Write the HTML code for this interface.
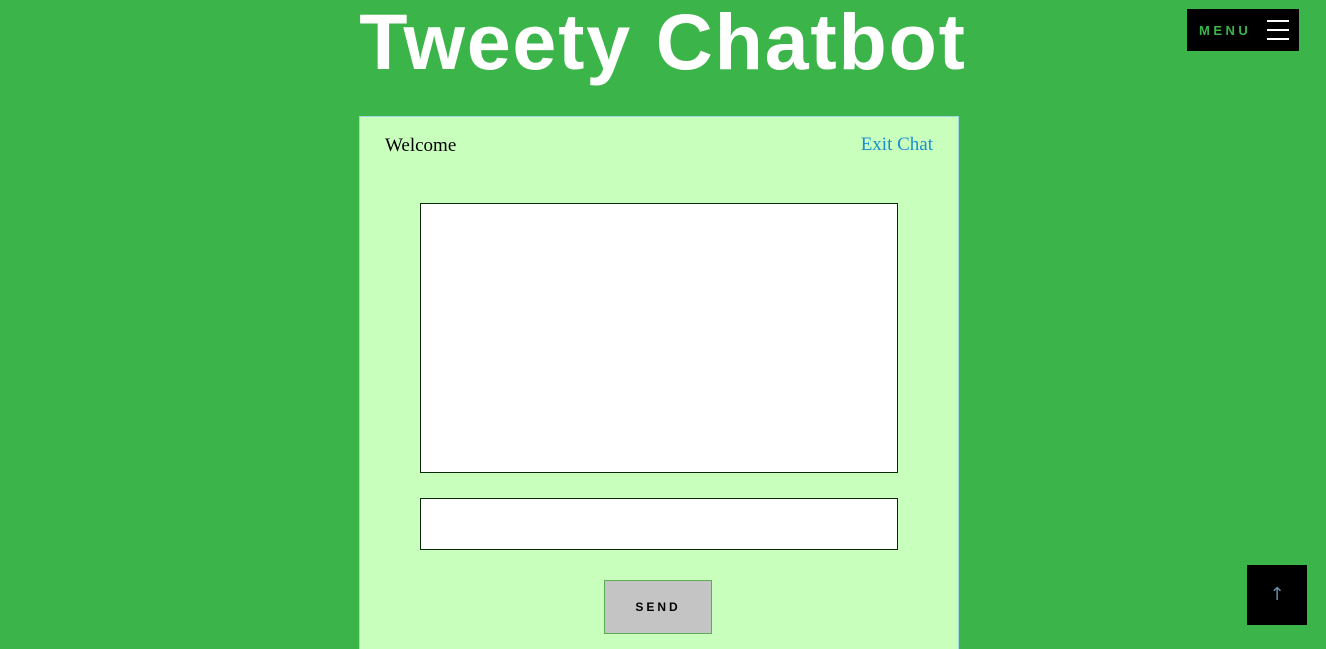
<!DOCTYPE html>
<html><head><style>
html,body{margin:0;width:1326px;height:649px;overflow:hidden}
body{background:#3bb54a;position:relative;font-family:"Liberation Serif",serif}
h1{position:absolute;left:0;right:0;top:-4px;margin:0;text-align:center;color:#fff;font:bold 79px/92px "Liberation Sans",sans-serif;letter-spacing:1.8px}
.menu{position:absolute;left:1187px;top:9px;width:112px;height:42px;background:#000}
.menu span{position:absolute;left:12px;top:14px;color:#3bb54a;font:bold 13px "Liberation Sans",sans-serif;letter-spacing:3.5px}
.menu i{position:absolute;left:80px;width:22px;height:2px;background:#fff}
.panel{position:absolute;left:359px;top:116px;width:598px;height:540px;background:#c9ffbd;border:1px solid #9dd8e0;border-bottom:0}
.w{position:absolute;left:25px;top:18px;font-size:19px;color:#000}
.e{position:absolute;right:25px;top:17px;font-size:19px;color:#1a8fd0}
.ta{position:absolute;left:60px;top:86px;width:476px;height:268px;background:#fff;border:1px solid #0a2a0a}
.in{position:absolute;left:60px;top:381px;width:476px;height:50px;background:#fff;border:1px solid #0a2a0a}
.btn{position:absolute;left:244px;top:463px;width:106px;height:52px;background:#c4c4c4;border:1px solid #5cad55;text-align:center;font:bold 12px/52px "Liberation Sans",sans-serif;letter-spacing:3px;color:#000}
.top{position:absolute;left:1247px;top:565px;width:60px;height:60px;background:#000;color:#6a8ba8;text-align:center;font:18px/60px "DejaVu Sans",sans-serif}
</style></head><body>
<h1>Tweety Chatbot</h1>
<div class="menu"><span>MENU</span><i style="top:11px"></i><i style="top:20px"></i><i style="top:29px"></i></div>
<div class="panel">
<div class="w">Welcome</div><div class="e">Exit Chat</div>
<div class="ta"></div><div class="in"></div>
<div class="btn">SEND</div>
</div>
<div class="top">↑</div>
</body></html>
